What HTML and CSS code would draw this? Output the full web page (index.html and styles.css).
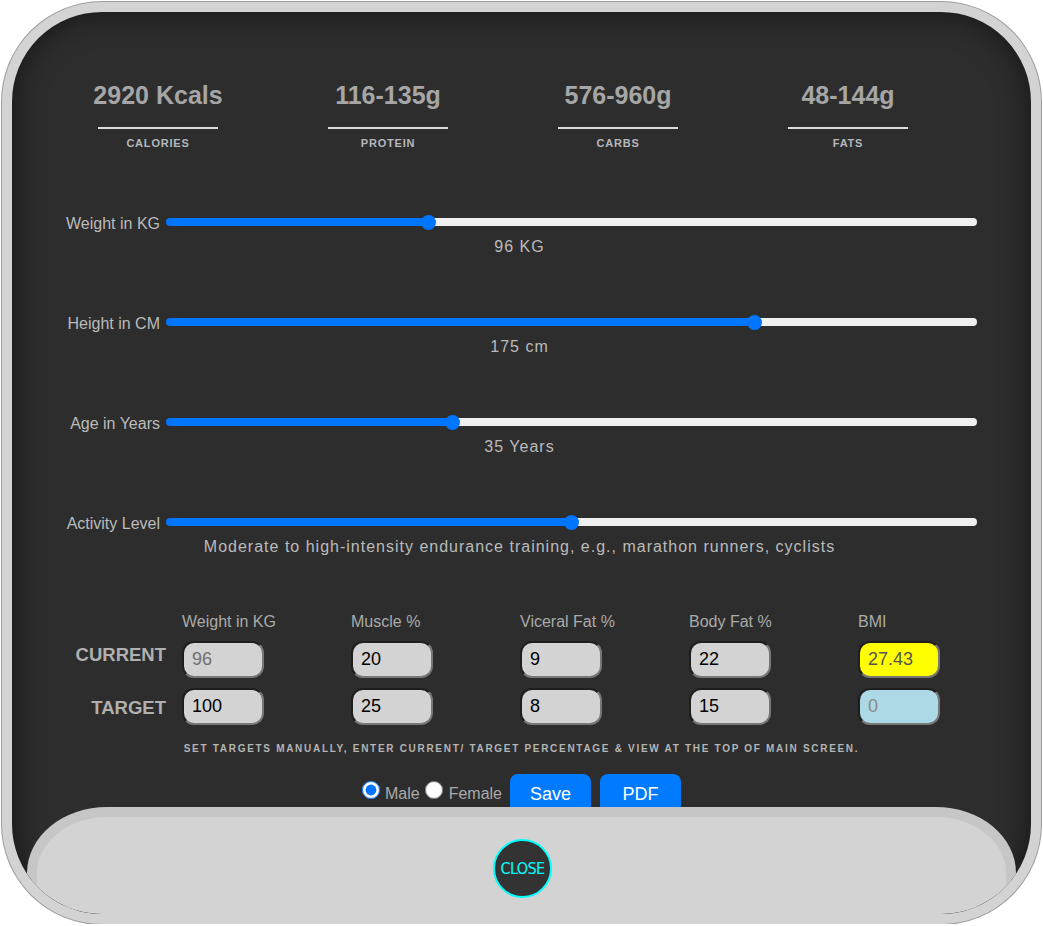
FILE: index.html
```html
<!DOCTYPE html>
<html lang="en">
<head>
<meta charset="utf-8">
<title>Macro Calculator</title>
<link rel="stylesheet" href="styles.css">
</head>
<body>
<div class="frame">
  <div class="stats">
    <div class="stat">
      <div class="stat-value">2920 Kcals</div>
      <div class="stat-rule"></div>
      <div class="stat-label">CALORIES</div>
    </div>
    <div class="stat">
      <div class="stat-value">116-135g</div>
      <div class="stat-rule"></div>
      <div class="stat-label">PROTEIN</div>
    </div>
    <div class="stat">
      <div class="stat-value">576-960g</div>
      <div class="stat-rule"></div>
      <div class="stat-label">CARBS</div>
    </div>
    <div class="stat">
      <div class="stat-value">48-144g</div>
      <div class="stat-rule"></div>
      <div class="stat-label">FATS</div>
    </div>
  </div>

  <div class="sliders">
    <div class="slider-block">
      <div class="slider-row">
        <label class="slider-label">Weight in KG</label>
        <input class="range" type="range" min="0" max="100" value="32" style="--p:32.2%">
      </div>
      <div class="slider-value">96 KG</div>
    </div>
    <div class="slider-block">
      <div class="slider-row">
        <label class="slider-label">Height in CM</label>
        <input class="range" type="range" min="0" max="100" value="73" style="--p:72.6%">
      </div>
      <div class="slider-value">175 cm</div>
    </div>
    <div class="slider-block">
      <div class="slider-row">
        <label class="slider-label">Age in Years</label>
        <input class="range" type="range" min="0" max="100" value="35" style="--p:35.1%">
      </div>
      <div class="slider-value">35 Years</div>
    </div>
    <div class="slider-block">
      <div class="slider-row">
        <label class="slider-label">Activity Level</label>
        <input class="range" type="range" min="0" max="100" value="50" style="--p:49.8%">
      </div>
      <div class="slider-value">Moderate to high-intensity endurance training, e.g., marathon runners, cyclists</div>
    </div>
  </div>

  <div class="measure">
    <div></div>
    <div class="m-head">Weight in KG</div>
    <div class="m-head">Muscle %</div>
    <div class="m-head">Viceral Fat %</div>
    <div class="m-head">Body Fat %</div>
    <div class="m-head">BMI</div>

    <div class="m-row-label m-current">CURRENT</div>
    <div><input class="m-input m-disabled" type="text" value="96"></div>
    <div><input class="m-input" type="text" value="20"></div>
    <div><input class="m-input" type="text" value="9"></div>
    <div><input class="m-input" type="text" value="22"></div>
    <div><input class="m-input m-bmi" type="text" value="27.43"></div>

    <div class="m-row-label m-target">TARGET</div>
    <div><input class="m-input" type="text" value="100"></div>
    <div><input class="m-input" type="text" value="25"></div>
    <div><input class="m-input" type="text" value="8"></div>
    <div><input class="m-input" type="text" value="15"></div>
    <div><input class="m-input m-bmi-target" type="text" placeholder="0"></div>
  </div>

  <p class="note">SET TARGETS MANUALLY, ENTER CURRENT/ TARGET PERCENTAGE &amp; VIEW AT THE TOP OF MAIN SCREEN.</p>

  <div class="actions">
    <input class="radio" type="radio" name="sex" id="male" checked>
    <label class="radio-label" for="male">Male</label>
    <input class="radio radio-f" type="radio" name="sex" id="female">
    <label class="radio-label" for="female">Female</label>
    <button class="btn btn-save">Save</button>
    <button class="btn">PDF</button>
  </div>

  <div class="panel">
    <button class="close">CLOSE</button>
  </div>
</div>
</body>
</html>
```

FILE: styles.css
```css
* { box-sizing: border-box; }

body {
  margin: 0;
  background: #ffffff;
  font-family: "Liberation Sans", Arial, sans-serif;
}

.frame {
  position: relative;
  margin: 2px 0 0 2px;
  width: 1039px;
  height: 922px;
  border: 10px solid #d3d3d3;
  border-radius: 100px;
  background: #2d2d2d;
  box-shadow: 0 0 0 1px #9c9c9c, inset 0 0 30px rgba(0, 0, 0, 0.55);
  overflow: hidden;
}

/* stats */
.stats {
  display: grid;
  grid-template-columns: repeat(4, 230px);
  margin: 69px 0 0 31px;
}
.stat {
  display: flex;
  flex-direction: column;
  align-items: center;
}
.stat-value {
  font-size: 25px;
  line-height: 29px;
  font-weight: bold;
  color: #a6a6a6;
}
.stat-rule {
  width: 120px;
  height: 2px;
  margin-top: 17px;
  background: #dcdcdc;
}
.stat-label {
  margin-top: 8px;
  font-size: 11px;
  line-height: 13px;
  font-weight: bold;
  letter-spacing: 0.8px;
  color: #b4b8bc;
}

/* sliders */
.sliders {
  margin: 64px 0 0 50px;
  width: 915px;
}
.slider-block + .slider-block {
  margin-top: 59px;
}
.slider-row {
  display: flex;
  align-items: center;
  height: 16px;
}
.slider-label {
  flex: 0 0 104px;
  padding: 3px 6px 0 0;
  text-align: right;
  font-size: 16px;
  line-height: 18px;
  color: #bbbbbb;
  white-space: nowrap;
}
.range {
  -webkit-appearance: none;
  appearance: none;
  flex: 1;
  height: 8px;
  margin: 0;
  border-radius: 4px;
  background: linear-gradient(to right, #0075ff var(--p), #efefef var(--p));
  outline: none;
}
.range::-webkit-slider-thumb {
  -webkit-appearance: none;
  appearance: none;
  width: 15px;
  height: 15px;
  border-radius: 50%;
  background: #0075ff;
  border: none;
}
.slider-value {
  margin-top: 8px;
  text-align: center;
  font-size: 16px;
  line-height: 17px;
  letter-spacing: 1px;
  color: #bbbbbb;
}

/* measurements */
.measure {
  display: grid;
  grid-template-columns: 120px repeat(5, 169px);
  grid-template-rows: 19px 37px 37px;
  row-gap: 10px;
  margin: 57px 0 0 50px;
}
.m-head {
  font-size: 16px;
  line-height: 19px;
  color: #aaaaaa;
  white-space: nowrap;
}
.m-row-label {
  padding-right: 16px;
  text-align: right;
  font-size: 18.5px;
  line-height: 21px;
  font-weight: bold;
  color: #b0b0b0;
}
.m-current { padding-top: 3px; }
.m-target { padding-top: 9px; }
.m-input {
  display: block;
  width: 82px;
  height: 37px;
  margin: 0;
  padding: 0 8px;
  border: 2px solid;
  border-color: #1e1e1e #777777 #777777 #1e1e1e;
  border-radius: 12px;
  background: #d3d3d3;
  font-family: "Liberation Sans", Arial, sans-serif;
  font-size: 18px;
  color: #000000;
  outline: none;
}
.m-disabled { color: #6f6f6f; }
.m-bmi {
  background: #ffff00;
  color: #555555;
}
.m-bmi-target { background: #add8e6; }
.m-bmi-target::placeholder { color: #8a8a8a; }

.note {
  margin: 18px 0 0;
  text-align: center;
  font-size: 10px;
  line-height: 12px;
  font-weight: bold;
  letter-spacing: 1.7px;
  color: #b4b4b4;
}

.actions {
  display: flex;
  justify-content: center;
  align-items: flex-start;
  margin-top: 19px;
}
.radio {
  width: 18px;
  height: 18px;
  margin: 7px 5px 0 0;
  accent-color: #0075ff;
}
.radio-f { margin-left: 5px; margin-right: 6px; }
.radio-label {
  margin-top: 11px;
  font-size: 16px;
  line-height: 18px;
  color: #aaaaaa;
}
.btn {
  width: 81px;
  height: 40px;
  margin-left: 9px;
  border: none;
  border-radius: 8px;
  background: #007bff;
  color: #ffffff;
  font-family: "Liberation Sans", Arial, sans-serif;
  font-size: 18px;
}
.btn-save { margin-left: 8px; }

/* bottom panel overlays the content */
.panel {
  position: absolute;
  left: 15px;
  top: 795px;
  width: 989px;
  height: 140px;
  border: 10px solid #c6c6c6;
  border-radius: 80px 80px 0 0 / 66px 66px 0 0;
  background: #d3d3d3;
  display: flex;
  justify-content: center;
  align-items: flex-start;
}
.close {
  margin: 22px 0 0 2px;
  width: 59px;
  height: 59px;
  padding: 0;
  border: 2px solid #00ffff;
  border-radius: 50%;
  background: #333333;
  color: #00ffff;
  font-family: "DejaVu Sans", sans-serif;
  font-stretch: condensed;
  font-size: 16px;
  letter-spacing: -0.6px;
}
```
